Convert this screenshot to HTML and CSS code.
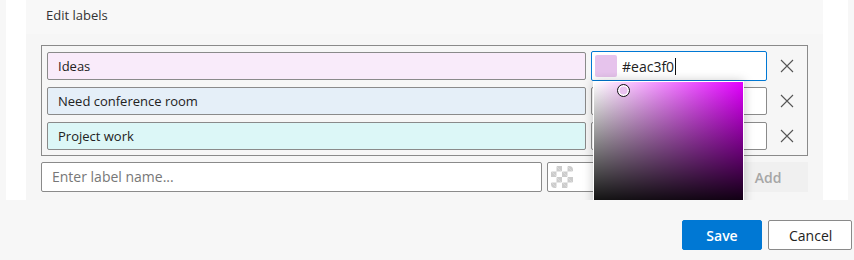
FILE: index.html
```html
<!DOCTYPE html>
<html lang="en">
<head>
    <meta charset="UTF-8">
    <meta name="viewport" content="width=device-width, initial-scale=1.0">
    <title>Edit labels</title>
    <link rel="stylesheet" href="styles.css">
</head>
<body>
    <div class="dialog-body">
        <div class="panel">
            <div class="panel-header">Edit labels</div>
            <div class="panel-content">
                <div class="label-list">
                    <div class="label-row">
                        <div class="label-name label-ideas">Ideas</div>
                        <div class="color-field focused">
                            <span class="swatch swatch-ideas"></span>
                            <span class="color-value">#eac3f0<span class="caret"></span></span>
                        </div>
                        <button class="remove-btn" type="button" aria-label="Remove">
                            <svg width="14" height="14" viewBox="0 0 14 14"><path d="M1 1 L13 13 M13 1 L1 13" stroke="#555" stroke-width="1.1" fill="none"/></svg>
                        </button>
                    </div>
                    <div class="label-row">
                        <div class="label-name label-room">Need conference room</div>
                        <div class="color-field"></div>
                        <button class="remove-btn" type="button" aria-label="Remove">
                            <svg width="14" height="14" viewBox="0 0 14 14"><path d="M1 1 L13 13 M13 1 L1 13" stroke="#555" stroke-width="1.1" fill="none"/></svg>
                        </button>
                    </div>
                    <div class="label-row">
                        <div class="label-name label-work">Project work</div>
                        <div class="color-field"></div>
                        <button class="remove-btn" type="button" aria-label="Remove">
                            <svg width="14" height="14" viewBox="0 0 14 14"><path d="M1 1 L13 13 M13 1 L1 13" stroke="#555" stroke-width="1.1" fill="none"/></svg>
                        </button>
                    </div>
                </div>
                <div class="new-row">
                    <div class="new-name">Enter label name...</div>
                    <div class="color-field new-color">
                        <span class="swatch checker"></span>
                    </div>
                    <button class="add-btn" type="button">Add</button>
                </div>

                <div class="picker">
                    <div class="picker-area">
                        <span class="picker-handle"></span>
                    </div>
                </div>
            </div>
        </div>
    </div>
    <div class="footer">
        <button class="btn btn-primary" type="button">Save</button>
        <button class="btn btn-default" type="button">Cancel</button>
    </div>
</body>
</html>
```

FILE: styles.css
```css
body {
    margin: 0;
    background-color: #f7f7f7;
    font-family: "Open Sans", "Noto Sans", Arial, sans-serif;
    font-size: 13px;
    color: #222;
    width: 854px;
    height: 260px;
    overflow: hidden;
}
.dialog-body {
    margin-left: 6px;
    width: 842px;
    height: 200px;
    padding: 0 25px 0 20px;
    box-sizing: border-box;
    background-color: #ffffff;
    overflow: hidden;
}
.panel {
    background-color: #f6f6f6;
    height: 200px;
}
.panel-header {
    background-color: #f8f8f8;
    padding: 6px 0 0 20px;
    height: 34px;
    color: #333;
    box-sizing: border-box;
}
.panel-content {
    position: relative;
    padding: 11px 15px 0 15px;
}
.label-list {
    border: 1px solid #8a8a8a;
    padding: 5px 0 4px 5px;
    display: flex;
    flex-direction: column;
    gap: 5px;
    width: 767px;
    box-sizing: border-box;
}
.label-row {
    display: flex;
    align-items: center;
    height: 30px;
}
.label-name {
    flex-shrink: 0;
    width: 539px;
    height: 28px;
    box-sizing: border-box;
    border: 1px solid #8a8a8a;
    border-radius: 2px;
    padding-left: 10px;
    line-height: 26px;
}
.label-ideas { background-color: #f9ebfa; }
.label-room { background-color: #e5eff8; }
.label-work { background-color: #dcf7f7; }
.color-field {
    flex-shrink: 0;
    margin-left: 5px;
    width: 176px;
    height: 28px;
    box-sizing: border-box;
    border: 1px solid #8a8a8a;
    border-radius: 2px;
    background-color: #ffffff;
    display: flex;
    align-items: center;
    padding-left: 3px;
}
.color-field.focused {
    height: 30px;
    border-color: #0078d4;
}
.swatch {
    width: 22px;
    height: 22px;
    border-radius: 2px;
}
.swatch-ideas { background-color: #e6c3ec; }
.color-value {
    margin-left: 5px;
    font-size: 14px;
    display: flex;
    align-items: center;
}
.caret {
    display: inline-block;
    width: 1px;
    height: 17px;
    background-color: #111;
    margin-left: 1px;
}
.remove-btn {
    flex-shrink: 0;
    border: none;
    background: none;
    width: 39px;
    height: 30px;
    padding: 0;
    display: flex;
    align-items: center;
    justify-content: center;
}
.new-row {
    display: flex;
    align-items: center;
    margin-top: 6px;
    height: 30px;
    width: 767px;
}
.new-name {
    width: 501px;
    height: 30px;
    box-sizing: border-box;
    border: 1px solid #8a8a8a;
    border-radius: 2px;
    background-color: #ffffff;
    color: #777;
    padding-left: 10px;
    line-height: 28px;
    font-size: 14px;
}
.new-color {
    height: 30px;
    width: 170px;
}
.checker {
    background-color: #ffffff;
    background-image:
        linear-gradient(45deg, #cccccc 25%, transparent 25%, transparent 75%, #cccccc 75%),
        linear-gradient(45deg, #cccccc 25%, transparent 25%, transparent 75%, #cccccc 75%);
    background-size: 11px 11px;
    background-position: 0 0, 5.5px 5.5px;
    border-radius: 4px;
}
.add-btn {
    margin-left: auto;
    width: 80px;
    height: 30px;
    border: none;
    background-color: #f0f0f0;
    color: #a6a6a6;
    font-family: inherit;
    font-size: 14px;
    font-weight: 600;
}
.picker {
    position: absolute;
    left: 567px;
    top: 47px;
    width: 151px;
    height: 130px;
    background-color: #ffffff;
    box-shadow: 0 0 10px rgba(0, 0, 0, 0.22);
    padding: 1px;
    box-sizing: border-box;
}
.picker-area {
    position: relative;
    height: 100%;
    background-image:
        linear-gradient(to bottom, rgba(0, 0, 0, 0), #000000),
        linear-gradient(to right, #ffffff, #e200ff);
}
.picker-handle {
    position: absolute;
    left: 23px;
    top: 2px;
    width: 11px;
    height: 11px;
    border-radius: 50%;
    border: 1.5px solid #111;
    box-shadow: inset 0 0 0 1.5px #ffffff;
    background-color: #eac3f0;
}
.footer {
    display: flex;
    justify-content: flex-end;
    gap: 6px;
    padding: 20px 2px 0 0;
}
.btn {
    height: 30px;
    padding: 0 20px;
    font-family: inherit;
    font-size: 14px;
    border-radius: 2px;
}
.btn-primary {
    width: 80px;
    background-color: #0078d4;
    border: 1px solid #0078d4;
    color: #ffffff;
    font-weight: 600;
}
.btn-default {
    width: 84px;
    background-color: #ffffff;
    border: 1px solid #8a8a8a;
    color: #222;
}
```
